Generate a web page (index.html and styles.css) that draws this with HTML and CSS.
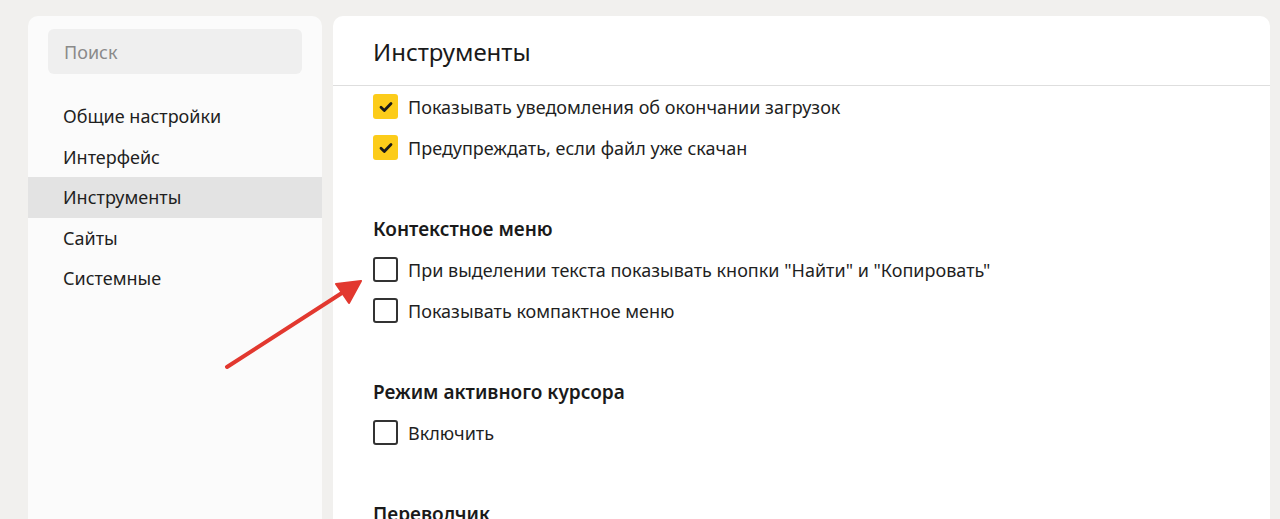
FILE: index.html
```html
<!DOCTYPE html>
<html lang="ru">
<head>
<meta charset="utf-8">
<link rel="stylesheet" href="styles.css">
</head>
<body>
<div class="page">
  <aside class="sidebar">
    <div class="search">Поиск</div>
    <nav class="nav">
      <div class="nav-item">Общие настройки</div>
      <div class="nav-item">Интерфейс</div>
      <div class="nav-item active">Инструменты</div>
      <div class="nav-item">Сайты</div>
      <div class="nav-item">Системные</div>
    </nav>
  </aside>
  <main class="main">
    <header class="main-header">Инструменты</header>
    <div class="content">
      <div class="group">
        <label class="row"><span class="box checked"><svg viewBox="0 0 24 24" width="24" height="24"><path d="M7 12.3l3.3 3.2L17 8.6" fill="none" stroke="#1a1a1a" stroke-width="2.8" stroke-linecap="round" stroke-linejoin="round"/></svg></span><span class="label">Показывать уведомления об окончании загрузок</span></label>
        <label class="row"><span class="box checked"><svg viewBox="0 0 24 24" width="24" height="24"><path d="M7 12.3l3.3 3.2L17 8.6" fill="none" stroke="#1a1a1a" stroke-width="2.8" stroke-linecap="round" stroke-linejoin="round"/></svg></span><span class="label">Предупреждать, если файл уже скачан</span></label>
      </div>
      <section class="section">
        <h2 class="section-title">Контекстное меню</h2>
        <label class="row"><span class="box"></span><span class="label">При выделении текста показывать кнопки "Найти" и "Копировать"</span></label>
        <label class="row"><span class="box"></span><span class="label">Показывать компактное меню</span></label>
      </section>
      <section class="section">
        <h2 class="section-title">Режим активного курсора</h2>
        <label class="row"><span class="box"></span><span class="label">Включить</span></label>
      </section>
      <section class="section">
        <h2 class="section-title">Переводчик</h2>
      </section>
    </div>
  </main>
  <svg class="arrow" width="1280" height="519" viewBox="0 0 1280 519">
    <path d="M227 367 L345 291" stroke="#e2382f" stroke-width="4" stroke-linecap="round" fill="none"/>
    <path d="M361 281 L336 284 L349 303 Z" fill="#e2382f" stroke="#e2382f" stroke-width="2" stroke-linejoin="round"/>
  </svg>
</div>
</body>
</html>
```
FILE: styles.css
```css
* { box-sizing: border-box; }
html, body { margin: 0; padding: 0; }
body {
  background: #f1f0ee;
  font-family: "Noto Sans", "Open Sans", sans-serif;
  color: #1f1f1f;
  width: 1280px;
  height: 519px;
  overflow: hidden;
}
.page {
  position: relative;
  display: flex;
  gap: 11px;
  padding: 16px 10px 0 28px;
  height: 519px;
}
.sidebar {
  width: 294px;
  flex: none;
  background: #fbfbfb;
  border-radius: 10px 10px 0 0;
  padding-top: 13px;
}
.search {
  margin: 0 20px;
  height: 45px;
  background: #efefef;
  border-radius: 6px;
  padding-left: 16px;
  display: flex;
  align-items: center;
  color: #8a8a8a;
  font-size: 18px;
}
.nav { margin-top: 22px; }
.nav-item {
  height: 40.5px;
  display: flex;
  align-items: center;
  padding-left: 35px;
  font-size: 18px;
  color: #1f1f1f;
}
.nav-item.active { background: #e3e3e3; }
.main {
  flex: 1;
  background: #ffffff;
  border-radius: 10px 10px 0 0;
}
.main-header {
  height: 70px;
  border-bottom: 1px solid #dedede;
  padding-left: 40px;
  display: flex;
  align-items: center;
  font-size: 24px;
  color: #1a1a1a;
  padding-top: 2px;
}
.content { padding: 0 40px; }
.row {
  display: flex;
  align-items: center;
  gap: 10px;
  height: 41px;
  font-size: 18px;
  color: #1f1f1f;
}
.box {
  width: 25px;
  height: 25px;
  flex: none;
  border: 2px solid #333;
  border-radius: 3px;
  display: flex;
  align-items: center;
  justify-content: center;
}
.box.checked {
  background: #fccc1a;
  border: none;
}
.section { margin-top: 41px; }
.section-title {
  margin: 0;
  font-size: 19px;
  font-weight: 600;
  height: 40px;
  line-height: 40px;
  color: #1a1a1a;
}
.arrow {
  position: absolute;
  left: 0;
  top: 0;
  pointer-events: none;
}
```
